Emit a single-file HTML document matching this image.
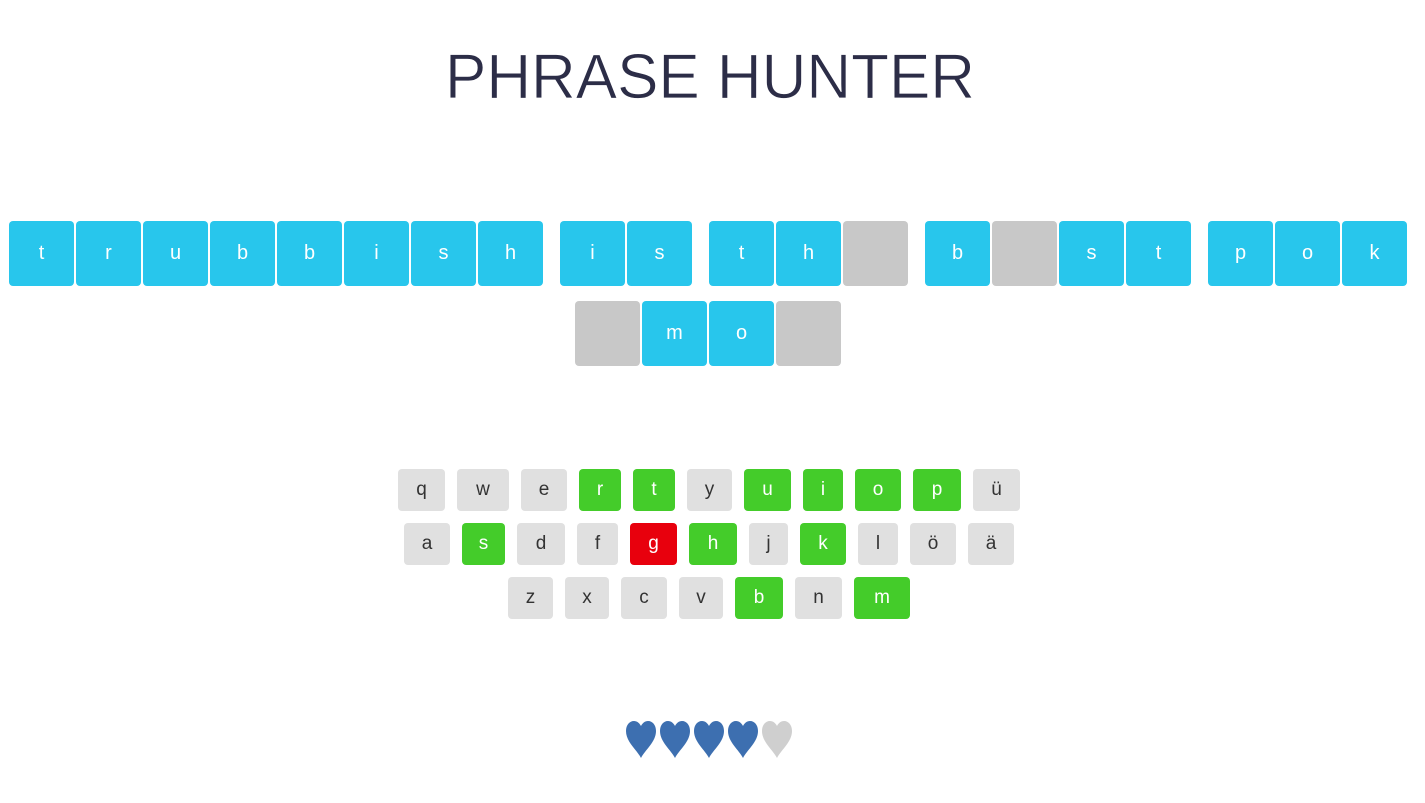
<!DOCTYPE html>
<html><head><meta charset="utf-8"><style>
body{margin:0;width:1425px;height:803px;background:#fff;position:relative;overflow:hidden;font-family:"Liberation Sans",sans-serif}
.t{position:absolute;width:65px;height:65px;border-radius:4px;background:#28c6ec;color:#fff;font-size:20px;line-height:65px;text-align:center}
.t.e{background:#c8c8c8}
.k{position:absolute;height:42px;border-radius:4px;background:#e0e0e0;color:#333;font-size:19px;line-height:42px;text-align:center}
.k.g{background:#44cc2a;color:#fff}
.k.r{background:#e8000d;color:#fff}
</style></head><body>
<svg style="position:absolute;left:0;top:0" width="1425" height="120"><text x="445" y="98" textLength="530" lengthAdjust="spacingAndGlyphs" font-family="Liberation Sans" font-size="63" fill="#2c2d47" stroke="#fff" stroke-width="0.8">PHRASE HUNTER</text></svg>
<div id="p"></div>
<div id="kb"></div>
<svg style="position:absolute;left:0;top:715" width="1425" height="50">
<g id="h"></g>
</svg>
<script>
var p=document.getElementById('p'),s='';
var r1=[[9,'t'],[76,'r'],[143,'u'],[210,'b'],[277,'b'],[344,'i'],[411,'s'],[478,'h'],[560,'i'],[627,'s'],[709,'t'],[776,'h'],[843,''],[925,'b'],[992,''],[1059,'s'],[1126,'t'],[1208,'p'],[1275,'o'],[1342,'k']];
r1.forEach(function(a){s+='<div class="t'+(a[1]?'':' e')+'" style="left:'+a[0]+'px;top:221px">'+a[1]+'</div>'});
[[575,''],[642,'m'],[709,'o'],[776,'']].forEach(function(a){s+='<div class="t'+(a[1]?'':' e')+'" style="left:'+a[0]+'px;top:301px">'+a[1]+'</div>'});
p.innerHTML=s;
var K=[[469,[[398,445,'q'],[457,509,'w'],[521,567,'e'],[579,621,'r','g'],[633,675,'t','g'],[687,732,'y'],[744,791,'u','g'],[803,843,'i','g'],[855,901,'o','g'],[913,961,'p','g'],[973,1020,'ü']]],
[523,[[404,450,'a'],[462,505,'s','g'],[517,565,'d'],[577,618,'f'],[630,677,'g','r'],[689,737,'h','g'],[749,788,'j'],[800,846,'k','g'],[858,898,'l'],[910,956,'ö'],[968,1014,'ä']]],
[577,[[508,553,'z'],[565,609,'x'],[621,667,'c'],[679,723,'v'],[735,783,'b','g'],[795,842,'n'],[854,910,'m','g']]]];
s='';K.forEach(function(r){r[1].forEach(function(k){s+='<div class="k '+(k[3]||'')+'" style="top:'+r[0]+'px;left:'+k[0]+'px;width:'+(k[1]-k[0])+'px">'+k[2]+'</div>'})});
document.getElementById('kb').innerHTML=s;
s='';for(var i=0;i<5;i++){var x=626+i*34;s+='<path transform="translate('+x+',6)" d="M15 37 C11 29 0 21 0 10 C0 4 3.5 0 8 0 C11 0 13.5 2 15 5 C16.5 2 19 0 22 0 C26.5 0 30 4 30 10 C30 21 19 29 15 37Z" fill="'+(i<4?'#3d6fb0':'#cfcfcf')+'"/>'}
document.getElementById('h').innerHTML=s;
</script>
</body></html>
